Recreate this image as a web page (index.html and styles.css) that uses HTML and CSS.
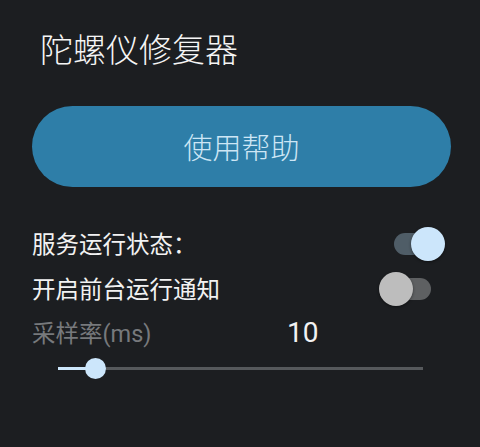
FILE: index.html
```html
<!DOCTYPE html>
<html lang="zh-CN">
<head>
<meta charset="utf-8">
<title>陀螺仪修复器</title>
<link rel="stylesheet" href="styles.css">
</head>
<body>
<div class="app">
  <h1 class="title">陀螺仪修复器</h1>
  <button class="help-btn">使用帮助</button>
  <div class="row">
    <span class="label">服务运行状态：</span>
    <div class="switch on"><div class="track"></div><div class="thumb"></div></div>
  </div>
  <div class="row">
    <span class="label">开启前台运行通知</span>
    <div class="switch off"><div class="track"></div><div class="thumb"></div></div>
  </div>
  <div class="rate-row">
    <span class="rate-label">采样率(ms)</span>
    <span class="rate-value">10</span>
  </div>
  <div class="slider">
    <div class="slider-track"></div>
    <div class="slider-fill" style="width: 10.3%"></div>
    <div class="slider-thumb" style="left: calc(10.3% - 10.5px)"></div>
  </div>
</div>
</body>
</html>
```

FILE: styles.css
```css
html, body {
  margin: 0;
  padding: 0;
  background: #1c1e21;
}
.app {
  padding: 28px 29px 0 32px;
  font-family: "Noto Sans CJK SC", Roboto, sans-serif;
  color: #f2f2f2;
}
.title {
  margin: 0;
  padding-left: 8px;
  font-size: 33px;
  line-height: 40px;
  font-weight: 300;
  color: #f5f5f5;
}
.help-btn {
  display: flex;
  align-items: center;
  justify-content: center;
  width: 100%;
  height: 81px;
  margin: 38px 0 0 0;
  padding: 0;
  border: none;
  border-radius: 41px;
  background: #2e7ea8;
  color: #cde6f5;
  font-family: "Noto Sans CJK SC", sans-serif;
  font-size: 29px;
  line-height: 29px;
  font-weight: 300;
}
.help-btn + .row {
  margin-top: 34px;
}
.row {
  display: flex;
  align-items: center;
  justify-content: space-between;
  height: 45px;
}
.label {
  font-size: 23.5px;
  line-height: 23.5px;
  color: #f2f2f2;
}
.switch {
  position: relative;
  width: 66px;
  height: 34px;
  margin-right: 6px;
}
.switch .track {
  position: absolute;
  left: 14.5px;
  top: 6px;
  width: 37px;
  height: 22px;
  border-radius: 11px;
}
.switch .thumb {
  position: absolute;
  top: 0;
  width: 34px;
  height: 34px;
  border-radius: 50%;
  box-shadow: 0 1px 3px rgba(0, 0, 0, 0.45);
}
.switch.on .track { background: #4f5d67; }
.switch.on .thumb { right: 0; background: #cce6fb; }
.switch.off .track { background: #5e6062; }
.switch.off .thumb { left: 0; background: #bdbdbd; }
.rate-row {
  display: flex;
  align-items: baseline;
  margin-top: 8px;
  font-family: Roboto, "Noto Sans CJK SC", sans-serif;
}
.rate-label {
  flex: 0 0 255px;
  font-size: 23.5px;
  line-height: 23.5px;
  color: #77797c;
}
.rate-value {
  font-size: 28px;
  line-height: 28px;
  color: #f2f2f2;
}
.slider {
  position: relative;
  height: 22px;
  margin: 10px 28px 0 26px;
}
.slider-track {
  position: absolute;
  left: 0;
  right: 0;
  top: 9.5px;
  height: 3px;
  background: #56595c;
}
.slider-fill {
  position: absolute;
  left: 0;
  top: 9.5px;
  height: 3px;
  background: #cce6fb;
}
.slider-thumb {
  position: absolute;
  top: 0.5px;
  width: 21px;
  height: 21px;
  border-radius: 50%;
  background: #cce6fb;
}
```
